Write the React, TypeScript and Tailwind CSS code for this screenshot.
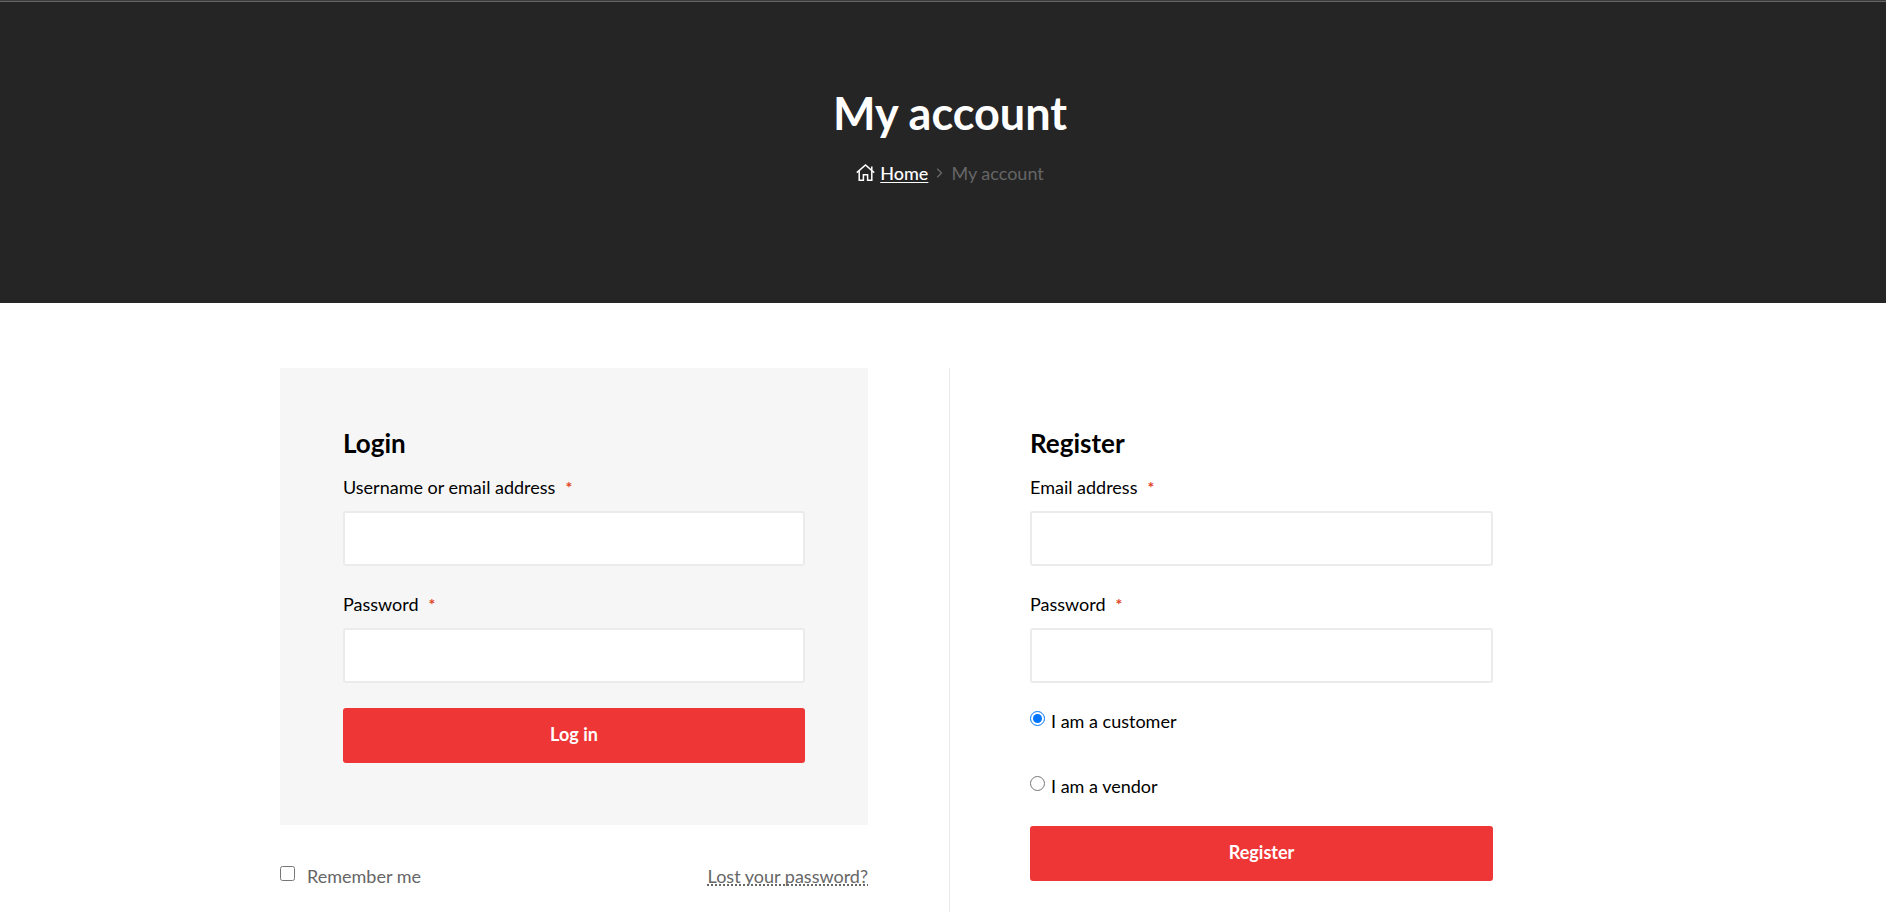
import React from "react";

type FieldProps = { id: string; label: string; type: string };

function Field({ id, label, type }: FieldProps) {
  return (
    <div>
      <label htmlFor={id} className="mb-[10px] flex items-start gap-[10px] text-lg leading-7 text-black">
        {label}
        <span className="text-base leading-7 font-bold text-[#e2401c]">*</span>
      </label>
      <input
        id={id}
        type={type}
        required
        className="block h-[55px] w-full rounded-[3px] border-2 border-[#ebebeb] bg-white px-4 text-lg text-black outline-none focus:border-neutral-400"
      />
    </div>
  );
}

function SubmitButton({ children }: { children: React.ReactNode }) {
  return (
    <button
      type="submit"
      className="block h-[55px] w-full cursor-pointer rounded-[3px] bg-[#ef3636] pb-[3px] text-lg leading-7 font-bold text-white hover:bg-[#d92c2c]"
    >
      {children}
    </button>
  );
}

function RoleOption({ id, label, checked }: { id: string; label: string; checked?: boolean }) {
  return (
    <div className="flex items-start gap-[6px]">
      <input
        id={id}
        type="radio"
        name="role"
        defaultChecked={checked}
        className="mt-1 size-[15px] shrink-0 accent-[#0075ff]"
      />
      <label htmlFor={id} className="text-lg leading-7 text-black">
        {label}
      </label>
    </div>
  );
}

function HomeIcon() {
  return (
    <svg
      width="19"
      height="17"
      viewBox="0 0 19 17"
      fill="none"
      stroke="currentColor"
      strokeWidth="1.5"
      className="mb-[2px]"
      aria-hidden="true"
    >
      <path d="M0.8 8.6 9.5 1l8.7 7.6M15.8 6.2V2.4" />
      <path d="M3.2 7v9.2h4.2v-5.4h4.2v5.4h4.2V7" />
    </svg>
  );
}

function ChevronIcon() {
  return (
    <svg width="7" height="10" viewBox="0 0 7 10" fill="none" stroke="currentColor" strokeWidth="1.4" aria-hidden="true">
      <path d="m1.2 0.8 4.3 4.2-4.3 4.2" />
    </svg>
  );
}

function PageHeader() {
  return (
    <header className="border-t border-[#3b3b3b] bg-[#252525]">
      <div className="flex flex-col items-center border-t border-[#666] pt-[84px] pb-[116px] pl-[14px]">
        <h1 className="text-[45px] leading-[54px] font-bold text-white">My account</h1>
        <nav aria-label="Breadcrumb" className="mt-[19px] flex items-center text-lg leading-7">
          <a href="#" className="flex items-center gap-[5px] font-medium text-white">
            <HomeIcon />
            <span className="underline decoration-1 underline-offset-2">Home</span>
          </a>
          <span className="mx-2 text-[#666]">
            <ChevronIcon />
          </span>
          <span className="text-[#666]">My account</span>
        </nav>
      </div>
    </header>
  );
}

function LoginForm() {
  return (
    <form onSubmit={(e) => e.preventDefault()}>
      <div className="bg-[#f6f6f6] px-[63px] pt-[63px] pb-[62px]">
        <h2 className="mb-[18px] text-[26px] leading-6 font-bold text-black">Login</h2>
        <div className="mb-[25px] flex flex-col gap-6">
          <Field id="login-user" label="Username or email address" type="text" />
          <Field id="login-password" label="Password" type="password" />
        </div>
        <SubmitButton>Log in</SubmitButton>
      </div>
      <div className="mt-[37px] flex items-start justify-between text-lg leading-7 text-[#666]">
        <div className="flex items-start gap-3">
          <input id="remember" type="checkbox" className="mt-1 size-[15px]" />
          <label htmlFor="remember">Remember me</label>
        </div>
        <a href="#" className="underline decoration-dotted decoration-2 underline-offset-1 [text-decoration-skip-ink:none]">
          Lost your password?
        </a>
      </div>
    </form>
  );
}

function RegisterForm() {
  return (
    <form onSubmit={(e) => e.preventDefault()}>
      <h2 className="mb-[18px] text-[26px] leading-6 font-bold text-black">Register</h2>
      <div className="mb-6 flex flex-col gap-6">
        <Field id="register-email" label="Email address" type="email" />
        <Field id="register-password" label="Password" type="password" />
      </div>
      <div className="mb-[26px] flex flex-col gap-[37px]">
        <RoleOption id="role-customer" label="I am a customer" checked />
        <RoleOption id="role-vendor" label="I am a vendor" />
      </div>
      <SubmitButton>Register</SubmitButton>
    </form>
  );
}

export default function App() {
  return (
    <div className="flex min-h-screen flex-col bg-white font-['Lato',sans-serif]">
      <PageHeader />
      <main className="flex grow flex-col pt-[65px] lg:pl-[14px]">
        <div className="mx-auto grid w-full max-w-[1340px] grow lg:grid-cols-2">
          <section className="border-[#ebebeb] lg:border-r lg:pr-[81px]">
            <LoginForm />
          </section>
          <section className="px-[63px] pt-[63px] lg:pr-[127px] lg:pl-20">
            <RegisterForm />
          </section>
        </div>
      </main>
    </div>
  );
}
